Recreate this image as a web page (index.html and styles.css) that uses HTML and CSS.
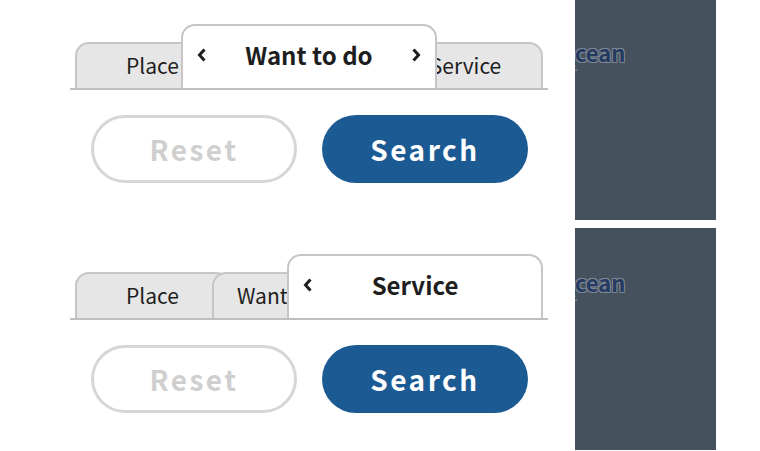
FILE: index.html
```html
<!DOCTYPE html>
<html lang="en">
<head>
  <meta charset="UTF-8" />
  <title>Search tabs</title>
  <link rel="stylesheet" href="styles.css">
</head>
<body>
  <div class="page">

    <section class="demo">
      <div class="search-box">
        <div class="tabs">
          <div class="tab tab-place">Place</div>
          <div class="tab tab-active tab-mid">
            <svg class="chev" width="10" height="14" viewBox="0 0 10 14"><path d="M7.5 1.5 L2.5 7 L7.5 12.5" /></svg>
            <span>Want to do</span>
            <svg class="chev" width="10" height="14" viewBox="0 0 10 14"><path d="M2.5 1.5 L7.5 7 L2.5 12.5" /></svg>
          </div>
          <div class="tab tab-service">Service</div>
        </div>
        <div class="actions">
          <button class="btn btn-reset">Reset</button>
          <button class="btn btn-search">Search</button>
        </div>
      </div>
      <div class="side-panel">
        <div class="side-title">Ocean</div>
        <div class="side-sub">ビーチ</div>
      </div>
    </section>

    <section class="demo">
      <div class="search-box">
        <div class="tabs">
          <div class="tab tab-place">Place</div>
          <div class="tab tab-want">Want to do</div>
          <div class="tab tab-active tab-last">
            <svg class="chev" width="10" height="14" viewBox="0 0 10 14"><path d="M7.5 1.5 L2.5 7 L7.5 12.5" /></svg>
            <span>Service</span>
            <span class="chev-space"></span>
          </div>
        </div>
        <div class="actions">
          <button class="btn btn-reset">Reset</button>
          <button class="btn btn-search">Search</button>
        </div>
      </div>
      <div class="side-panel">
        <div class="side-title">Ocean</div>
        <div class="side-sub">ビーチ</div>
      </div>
    </section>

  </div>
</body>
</html>
```

FILE: styles.css
```css
* {
  box-sizing: border-box;
}

body {
  margin: 0;
  background: #fff;
  font-family: "Noto Sans CJK JP", "Noto Sans", sans-serif;
  color: #1e1e1e;
}

.page {
  display: flex;
  flex-direction: column;
  gap: 8px;
  margin-top: -2px;
}

.demo {
  display: flex;
  height: 222px;
}

.search-box {
  width: 575px;
  padding: 28px 0 0 70px;
}

.tabs {
  width: 478px;
  height: 64px;
  display: flex;
  align-items: flex-end;
  padding-left: 5px;
  border-bottom: 2px solid #bfbfbf;
}

.tab {
  position: relative;
  flex: none;
  width: 155px;
  height: 46px;
  padding-top: 9px;
  background: #e6e6e6;
  border: 2px solid #c6c6c6;
  border-bottom: none;
  border-radius: 14px 14px 0 0;
  font-size: 21px;
  line-height: 24px;
  text-align: center;
  white-space: nowrap;
  overflow: hidden;
}

.tab-active {
  z-index: 3;
  width: 256px;
  height: 64px;
  padding: 15px 14px 0;
  background: #fff;
  display: flex;
  justify-content: space-between;
  align-items: flex-start;
  font-size: 24px;
  font-weight: 700;
  line-height: 28px;
}

.tab-mid {
  margin-left: -49px;
}

.tab-service {
  margin-left: -49px;
  text-align: center;
}

.tab-want {
  z-index: 1;
  margin-left: -18px;
  text-align: left;
  padding-left: 23px;
}

.tab-last {
  margin-left: -80px;
}

.chev {
  margin-top: 7px;
  fill: none;
  stroke: #1e1e1e;
  stroke-width: 3;
}

.chev-space {
  width: 10px;
}

.actions {
  display: flex;
  gap: 25px;
  margin: 25px 0 0 21px;
}

.btn {
  width: 206px;
  height: 68px;
  border-radius: 34px;
  font-family: inherit;
  font-size: 28px;
  font-weight: 700;
  letter-spacing: 2.5px;
  cursor: pointer;
}

.btn-reset {
  background: #fff;
  border: 3px solid #d6d6d6;
  color: #cfcfcf;
}

.btn-search {
  background: #1c5a94;
  border: none;
  color: #fff;
}

.side-panel {
  width: 141px;
  background: #46515e;
  overflow: hidden;
  padding-top: 42px;
}

.side-title {
  margin-left: -17px;
  font-size: 22px;
  font-weight: 700;
  line-height: 24px;
  color: #253a60;
  text-shadow: -1px -1px 0 #7c8590, 1px -1px 0 #7c8590, -1px 1px 0 #7c8590, 1px 1px 0 #7c8590;
}

.side-sub {
  margin-left: -30px;
  font-size: 11px;
  font-weight: 700;
  line-height: 12px;
  color: #7c8590;
}
```
